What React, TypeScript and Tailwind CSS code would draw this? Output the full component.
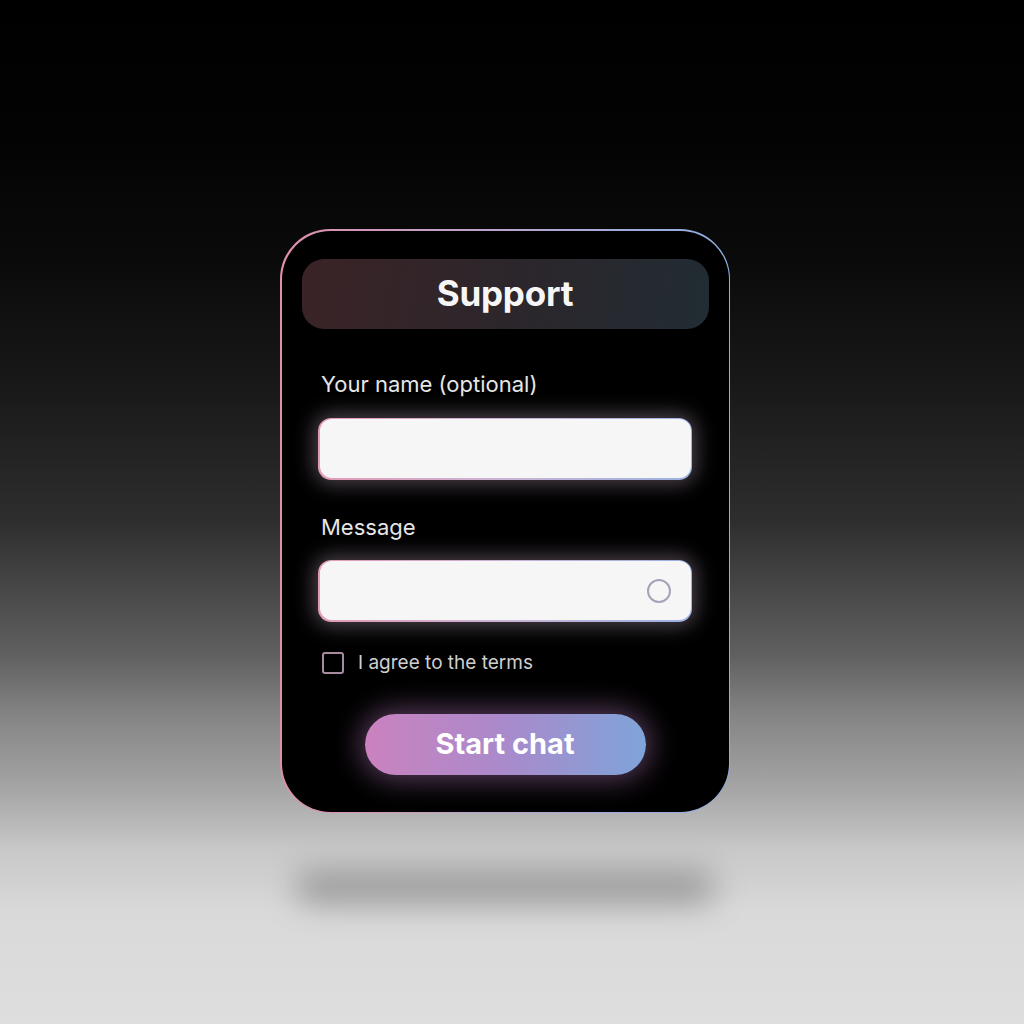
import React from "react";

const font = { fontFamily: "Inter, 'Noto Sans', 'Liberation Sans', sans-serif" };

function GlowInput({ withIcon }: { withIcon?: boolean }) {
  return (
    <div className="relative rounded-[13px] p-[1.5px] bg-[linear-gradient(90deg,#e29bb4,#c9b4d6_50%,#9bb1e0)] shadow-[0_0_20px_4px_rgba(235,205,235,0.33)]">
      <input
        type="text"
        className="block h-[59px] w-full rounded-[12px] bg-[#f6f6f7] px-4 text-[18px] text-[#222] outline-none"
      />
      {withIcon && (
        <span className="absolute right-[21px] top-1/2 h-[24px] w-[24px] -translate-y-1/2 rounded-full border-2 border-[#a4a4b8]" />
      )}
    </div>
  );
}

export default function App() {
  return (
    <div
      className="h-[1024px] w-[1024px] overflow-hidden bg-[linear-gradient(to_bottom,#000_0%,#030303_13%,#0a0a0a_25%,#191919_38%,#2e2e2e_51%,#454545_57%,#606060_64%,#858585_70%,#a5a5a5_77%,#c8c8c8_83%,#d9d9d9_89%,#dedede_100%)] pl-[280px] pt-[229px]"
      style={font}
    >
      <div className="flex w-[450px] flex-col items-center">
        {/* Card */}
        <div className="w-full rounded-[50px] p-[1.5px] bg-[linear-gradient(90deg,#e08fae,#b8a4cf_50%,#8cb0e2)]">
          <div className="flex flex-col rounded-[48.5px] bg-black px-[20px] pb-[37px] pt-[28px]">
            {/* Header */}
            <div className="flex h-[70px] items-center justify-center rounded-[22px] bg-[linear-gradient(100deg,#3b2326_0%,#2c262b_50%,#212c33_100%)]">
              <span className="text-[35px] font-bold tracking-[-0.2px] text-[#f6f6f6]">Support</span>
            </div>

            <div className="flex flex-col px-[16.5px]">
              <label className="mt-[41px] pl-[3px] text-[22px] leading-[28px] text-[#e6e6e6]">
                Your name (optional)
              </label>
              <div className="mt-[20px]">
                <GlowInput />
              </div>

              <label className="mt-[33px] pl-[3px] text-[22px] leading-[28px] text-[#e6e6e6]">
                Message
              </label>
              <div className="mt-[19px]">
                <GlowInput withIcon />
              </div>

              <div className="mt-[30px] flex items-center gap-[14px] pl-[4px]">
                <span className="h-[22px] w-[22px] rounded-[3px] border-2 border-[#a98b9f]" />
                <span className="text-[19px] leading-[22px] text-[#cfcfcf]">I agree to the terms</span>
              </div>

              <div className="mt-[40px] flex justify-center">
                <button className="flex h-[61px] w-[281px] items-center justify-center rounded-full bg-[linear-gradient(90deg,#cb82bf_0%,#a98acb_50%,#7fa4d9_100%)] shadow-[0_0_28px_5px_rgba(205,140,215,0.42)]">
                  <span className="text-[29px] font-bold text-white">Start chat</span>
                </button>
              </div>
            </div>
          </div>
        </div>

        {/* Floor shadow */}
        <div className="mt-[58px] h-[32px] w-[420px] rounded-full bg-[#888] opacity-80 blur-[16px]" />
      </div>
    </div>
  );
}
